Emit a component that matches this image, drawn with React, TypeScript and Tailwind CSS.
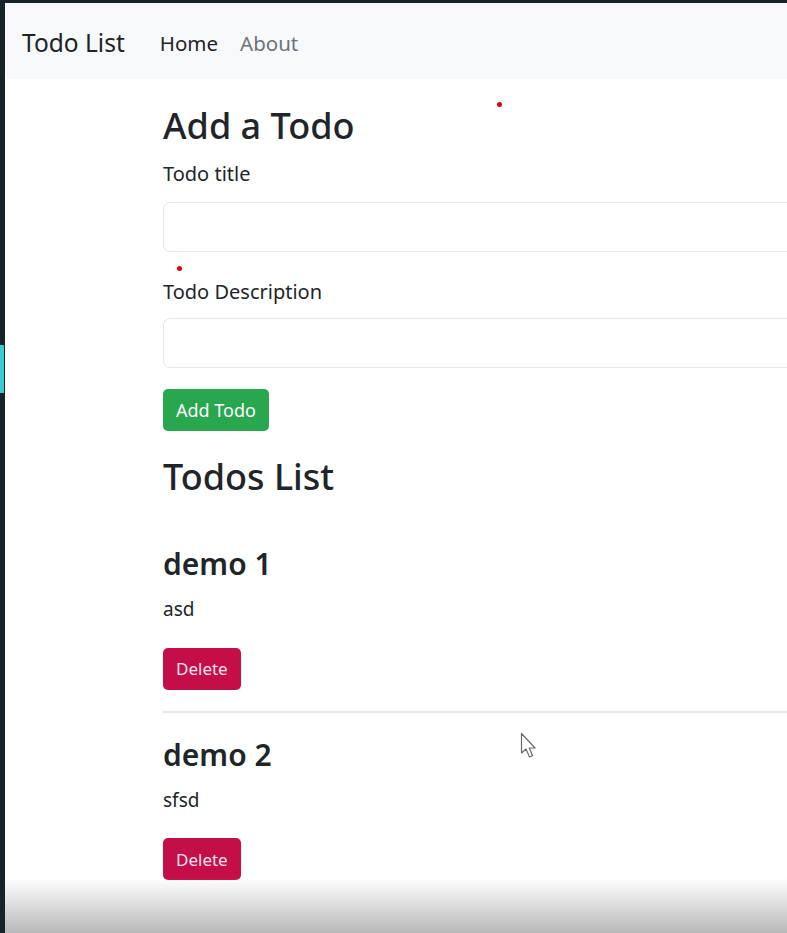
const todos = [
  { title: "demo 1", desc: "asd" },
  { title: "demo 2", desc: "sfsd" },
];

const font = { fontFamily: '"Noto Sans", "Open Sans", sans-serif' };

const App = () => {
  return (
    <div
      className="relative h-[933px] w-[787px] overflow-hidden bg-[#16242a] pt-[3px] pl-[5px]"
      style={font}
    >
      <div className="h-full w-full overflow-hidden bg-white text-[#212529]">
        <nav className="flex h-[76px] items-center bg-[#f7f9fa] pt-[4px] pl-[17px]">
          <span className="text-[24.5px] text-[#1f2326]">Todo List</span>
          <div className="ml-[35px] flex gap-[22px] text-[20.5px]">
            <a className="text-[#1f2326]">Home</a>
            <a className="text-[#6d7378]">About</a>
          </div>
        </nav>

        <div className="w-[1000px] pl-[158px]">
          <h2 className="mt-[25px] text-[36px] leading-[1.2] font-medium">Add a Todo</h2>
          <form className="mt-[12px]">
            <label className="block text-[20px] leading-[1.5]">Todo title</label>
            <input className="mt-[13px] block h-[50px] w-full rounded-[7px] border border-[#e3e6ea]" />
            <label className="mt-[25px] block text-[20px] leading-[1.5]">Todo Description</label>
            <input className="mt-[11px] block h-[50px] w-full rounded-[7px] border border-[#e3e6ea]" />
            <button
              type="button"
              className="mt-[21px] h-[42px] rounded-[5px] bg-[#28a74f] px-[13px] text-[18px] text-white"
            >
              Add Todo
            </button>
          </form>

          <h2 className="mt-[24px] text-[36px] leading-[1.2] font-medium">Todos List</h2>

          <div className="mt-[48px]">
            {todos.map((t, i) => (
              <div key={t.title}>
                {i > 0 && <hr className="mt-[21px] mb-[24px] border-t-2 border-[#e8e8e8]" />}
                <h4 className="text-[30px] leading-[1.2] font-semibold">{t.title}</h4>
                <p className="mt-[13px] text-[19px] leading-[1.5]">{t.desc}</p>
                <button
                  type="button"
                  className="mt-[24px] h-[42px] rounded-[5px] bg-[#c30e47] px-[13px] text-[17px] text-[#fbe2ec]"
                >
                  Delete
                </button>
              </div>
            ))}
          </div>
        </div>
      </div>

      {/* screen recording artifacts */}
      <div className="absolute top-[102px] left-[497px] h-[5px] w-[5px] rounded-full bg-[#e00000]" />
      <div className="absolute top-[266px] left-[177px] h-[5px] w-[5px] rounded-full bg-[#e00000]" />
      <div className="absolute top-[345px] left-0 h-[48px] w-[4px] bg-[#3cc9d2]" />

      <svg className="absolute top-[732px] left-[520px]" width="22" height="30" viewBox="0 0 22 30">
        <path
          d="M1.5 1.5 L1.5 21 L6 17 L9.5 25 L12.5 23.8 L9.2 16 L15 16 Z"
          fill="#ffffff"
          stroke="#6b6b6b"
          strokeWidth="1.2"
          strokeLinejoin="round"
        />
      </svg>

      <div className="absolute right-0 bottom-0 left-[5px] h-[55px] bg-linear-to-b from-white/0 via-[#dcdcdc] to-[#b8b8b8]" />
    </div>
  );
};

export default App;
